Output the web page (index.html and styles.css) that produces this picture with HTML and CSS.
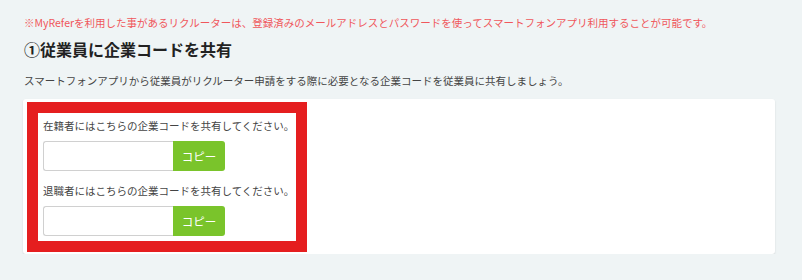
FILE: index.html
```html
<!DOCTYPE html>
<html lang="ja">
<head>
    <meta charset="UTF-8">
    <meta name="viewport" content="width=device-width, initial-scale=1.0">
    <title>企業コード</title>
    <link rel="stylesheet" href="styles.css">
</head>
<body>
    <div class="page">
        <p class="notice">※MyReferを利用した事があるリクルーターは、登録済みのメールアドレスとパスワードを使ってスマートフォンアプリ利用することが可能です。</p>
        <h2 class="section-title">①従業員に企業コードを共有</h2>
        <p class="section-desc">スマートフォンアプリから従業員がリクルーター申請をする際に必要となる企業コードを従業員に共有しましょう。</p>

        <div class="card">
            <div class="highlight">
                <div class="code-group">
                    <div class="code-label">在籍者にはこちらの企業コードを共有してください。</div>
                    <div class="code-row">
                        <input type="text" class="code-input" readonly>
                        <button class="copy-btn">コピー</button>
                    </div>
                </div>
                <div class="code-group">
                    <div class="code-label">退職者にはこちらの企業コードを共有してください。</div>
                    <div class="code-row">
                        <input type="text" class="code-input" readonly>
                        <button class="copy-btn">コピー</button>
                    </div>
                </div>
            </div>
        </div>
    </div>
</body>
</html>
```

FILE: styles.css
```css
* {
    margin: 0;
    padding: 0;
    box-sizing: border-box;
}

body {
    font-family: "Noto Sans CJK JP", "Noto Sans", sans-serif;
    background-color: #eff4f5;
    color: #333;
}

.page {
    padding: 15px 27px 0 23px;
}

.notice {
    font-size: 10.5px;
    line-height: 16px;
    color: #f0575c;
    padding-left: 1px;
}

.section-title {
    font-size: 16px;
    font-weight: 700;
    line-height: 22px;
    color: #222;
    margin-top: 7px;
    padding-left: 1px;
}

.section-desc {
    font-size: 10.5px;
    line-height: 16px;
    color: #444;
    margin-top: 13px;
    padding-left: 1px;
}

.card {
    background: #fff;
    border-radius: 3px;
    box-shadow: 0 1px 2px rgba(0,0,0,0.12);
    margin-top: 10px;
    height: 155px;
    padding: 3px 4px;
}

.highlight {
    width: 280px;
    height: 150px;
    border: 11px solid #e51e1f;
    padding: 4px 5px 0 5px;
    display: flex;
    flex-direction: column;
    gap: 11px;
}

.code-label {
    font-size: 10.5px;
    line-height: 18px;
    color: #444;
    white-space: nowrap;
}

.code-row {
    display: flex;
    margin-top: 6px;
    height: 30px;
}

.code-input {
    width: 130px;
    height: 30px;
    border: 1px solid #d0d0d0;
    border-right: none;
    border-radius: 3px 0 0 3px;
    background: #fff;
    outline: none;
}

.copy-btn {
    width: 52px;
    height: 30px;
    border: none;
    border-radius: 0 3px 3px 0;
    background: #7ac42b;
    color: #fff;
    font-family: inherit;
    font-size: 11.5px;
    cursor: pointer;
}
```
